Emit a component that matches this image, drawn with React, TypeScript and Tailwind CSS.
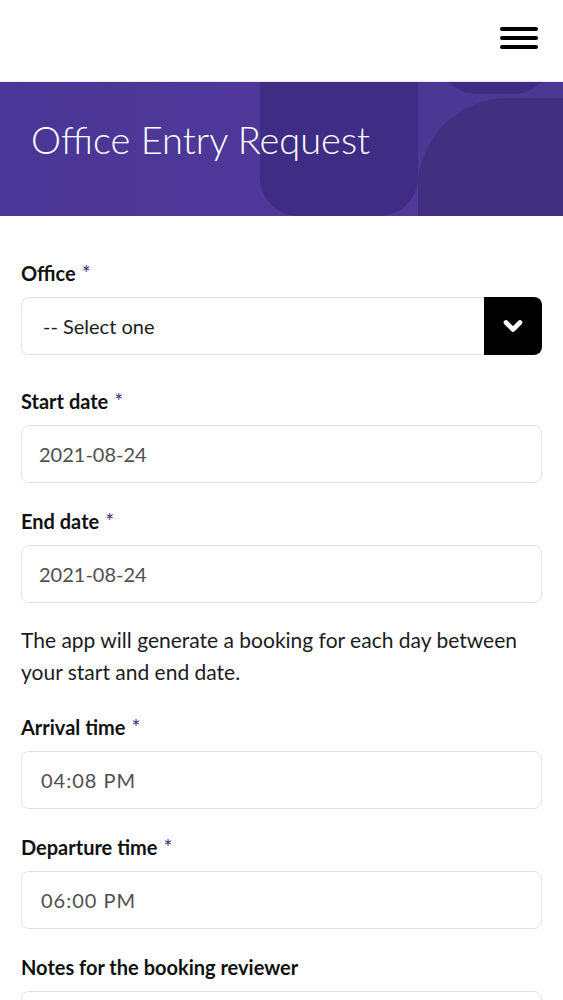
import { ChevronDown } from 'lucide-react';

const font = { fontFamily: 'Lato, "Noto Sans", sans-serif' };

function Label({ text, required = true }: { text: string; required?: boolean }) {
  return (
    <label className="mb-3 block text-[20px] font-bold leading-6 text-[#111]">
      {text}
      {required && <span className="ml-1.5 align-top text-[21px] font-normal leading-6 text-[#3d2f7a]">*</span>}
    </label>
  );
}

function Field({ label, value, pad = 'pl-[17px]', gap = 'mt-[26px]' }: { label: string; value: string; pad?: string; gap?: string }) {
  return (
    <div className={gap}>
      <Label text={label} />
      <div className={`flex h-[58px] items-center rounded-lg border border-[#e3e3e3] bg-white ${pad} text-[20px] text-[#4f4f4f]`}>
        {value}
      </div>
    </div>
  );
}

export default function App() {
  return (
    <div className="min-h-screen w-full bg-white" style={font}>
      <header className="flex h-[82px] items-center justify-end border-b border-[#e6e6ee] pr-[25px]">
        <button className="flex w-[38px] flex-col gap-[5px] pb-[6px]">
          <span className="h-[4px] w-full rounded-full bg-black" />
          <span className="h-[4px] w-full rounded-full bg-black" />
          <span className="h-[4px] w-full rounded-full bg-black" />
        </button>
      </header>

      <div className="relative flex h-[134px] items-center overflow-hidden bg-gradient-to-r from-[#4a3696] to-[#53399b] pb-[20px] pl-[31px]">
        <div className="absolute -top-10 bottom-0 left-[260px] w-[158px] rounded-b-[38px] bg-[#3f2d85]" />
        <div className="absolute inset-y-0 left-[418px] right-0 bg-[#4a3895]" />
        <div className="absolute -top-[60px] left-[440px] h-[72px] w-[110px] rounded-full bg-[#3f2d85]" />
        <div className="absolute left-[418px] top-[16px] h-[240px] w-[240px] rounded-[90px] bg-[#41307f]" />
        <h1 className="relative text-[38px] font-light leading-none text-white">Office Entry Request</h1>
      </div>

      <form className="px-[21px] pb-10 pt-[45px]">
        <div>
          <Label text="Office" />
          <div className="flex h-[58px] items-stretch">
            <div className="flex flex-1 items-center rounded-l-lg border border-r-0 border-[#e3e3e3] pl-[21px] text-[20px] text-[#1c1c1c]">
              -- Select one
            </div>
            <div className="flex w-[58px] items-center justify-center rounded-r-lg bg-black">
              <ChevronDown className="h-7 w-7 text-white" strokeWidth={4} />
            </div>
          </div>
        </div>

        <Field label="Start date" value="2021-08-24" gap="mt-[34px]" />
        <Field label="End date" value="2021-08-24" />

        <p className="mt-[21px] text-[21px] leading-8 text-[#1c1c1c]">
          The app will generate a booking for each day between your start and end date.
        </p>

        <Field label="Arrival time" value="04:08 PM" pad="pl-[19px] tracking-[1px]" gap="mt-[27px]" />
        <Field label="Departure time" value="06:00 PM" pad="pl-[19px] tracking-[1px]" />

        <div className="mt-[26px]">
          <Label text="Notes for the booking reviewer" required={false} />
          <div className="h-[120px] rounded-lg border border-[#e3e3e3]" />
        </div>
      </form>
    </div>
  );
}
